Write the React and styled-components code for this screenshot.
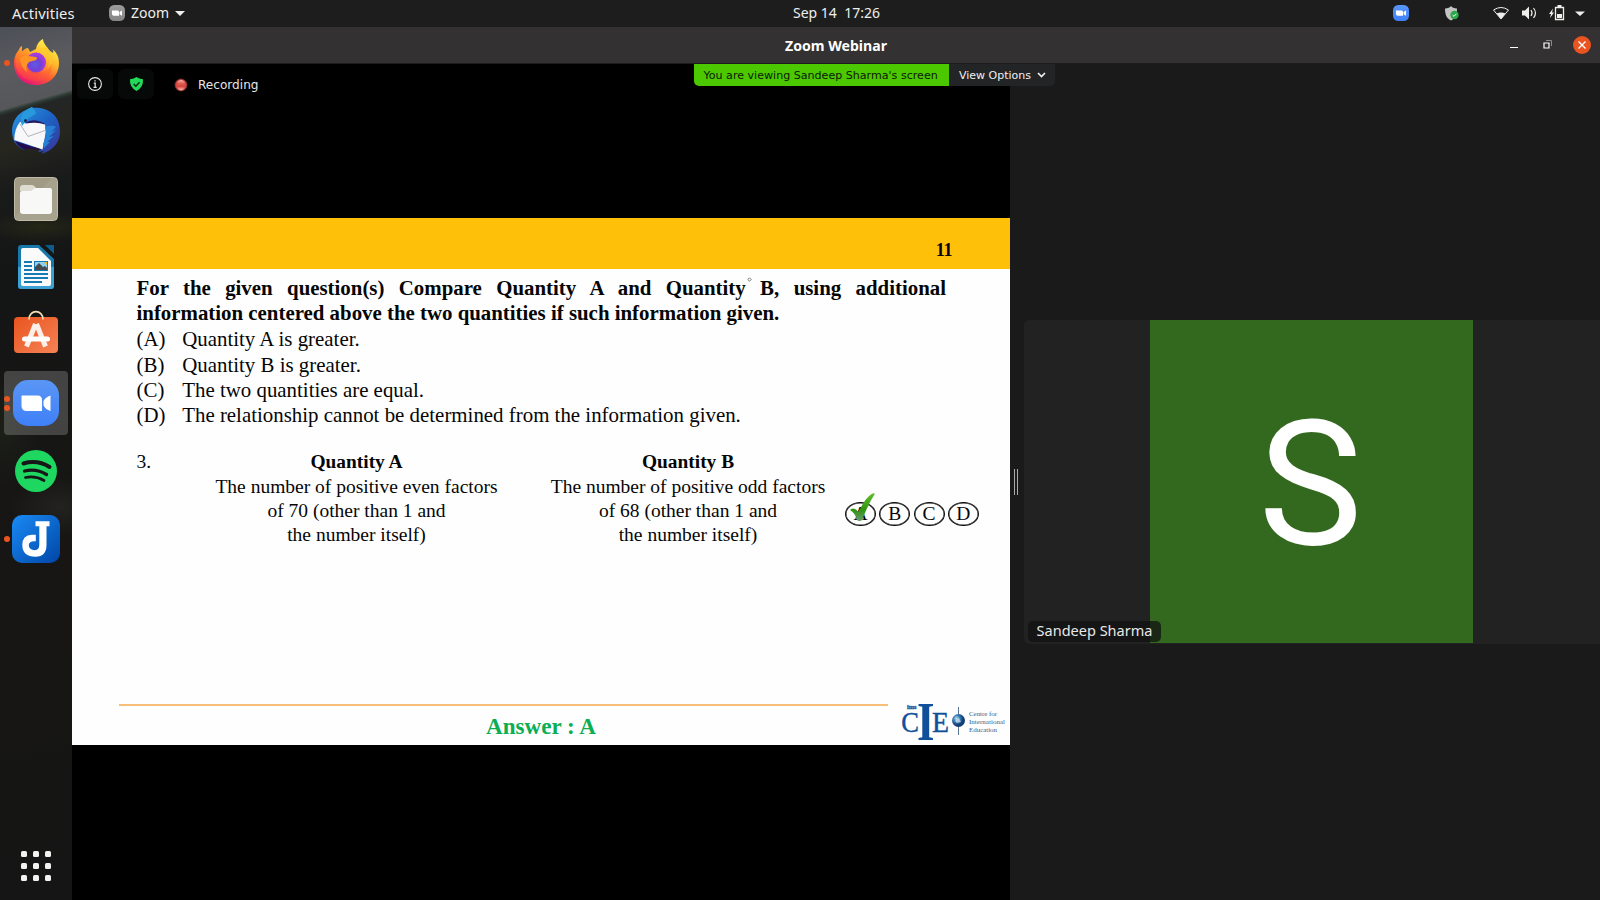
import React from 'react';
import styled, { createGlobalStyle } from 'styled-components';

const GlobalStyle = createGlobalStyle`
  *, *::before, *::after { box-sizing: border-box; }
  body { margin: 0; background: #000; font-family: "Noto Sans", sans-serif; overflow: hidden; }
  svg { display: block; flex: none; overflow: visible; }
`;

const Desktop = styled.div`
  display: grid;
  grid-template: 27px 873px / 72px 1528px;
  width: 1600px;
  height: 900px;
  background: #1a1a1a;
`;

const TopBar = styled.header`
  grid-column: 1 / -1;
  display: flex;
  align-items: center;
  background: #1d1d1d;
  color: #eeeeec;
  font-size: 14px;
  line-height: 26px;
  white-space: pre;
`;
const Activities = styled.span`
  width: 109px;
  padding: 0 0 1px 12px;
  font-size: 14.7px;
  letter-spacing: 0.15px;
`;
const AppMenu = styled.div`
  display: flex;
  align-items: center;
  gap: 6px;
  width: 684px;
  padding-bottom: 1px;
`;
const Clock = styled.time`
  width: 600px;
  padding-bottom: 1px;
`;
const Tray = styled.div`
  display: flex;
  align-items: center;
  gap: 20px;
  padding-bottom: 1px;
`;

const Dock = styled.nav`
  display: flex;
  flex-direction: column;
  gap: 4px;
  padding: 4px 4px 2px;
  background:
    radial-gradient(ellipse 60px 16px at 40px 200px, rgba(58, 62, 22, 0.4), transparent),
    radial-gradient(ellipse 40px 60px at 4px 400px, rgba(40, 48, 28, 0.35), transparent),
    radial-gradient(ellipse 50px 30px at 60px 480px, rgba(46, 46, 44, 0.5), transparent),
    linear-gradient(164deg, #4c4f57 0, #5b5b5f 45px, #55575a 80px, #2b3a32 83px, #242626 86px, #26261f 120px, #191a1a 160px, #141515 240px, #171614 520px, #151515 100%);
`;
const DockSlot = styled.div`
  position: relative;
  display: flex;
  align-items: center;
  justify-content: center;
  width: 64px;
  height: 64px;
  border-radius: 4px;
  background: ${(p) => (p.$active ? 'rgba(255,255,255,0.2)' : 'transparent')};
`;
const RunningDots = styled.span`
  position: absolute;
  left: 0;
  top: 0;
  height: 100%;
  display: flex;
  flex-direction: column;
  justify-content: center;
  gap: 3px;
`;
const Dot = styled.i`
  width: 6px;
  height: 6px;
  border-radius: 50%;
  background: #e95420;
`;
const AppGrid = styled.div`
  display: grid;
  grid-template: repeat(3, 6px) / repeat(3, 6px);
  gap: 6px;
  margin: auto auto 17px;
`;
const GridCell = styled.i`
  border-radius: 1.5px;
  background: #f2f2f0;
`;

const Window = styled.main`
  position: relative;
  display: grid;
  grid-template: 37px 836px / 938px 590px;
`;
const TitleBar = styled.div`
  grid-column: 1 / -1;
  display: grid;
  grid-template-columns: 1fr auto 1fr;
  align-items: center;
  background: #333132;
  border-bottom: 1px solid #1c1b1b;
  color: #fff;
  font-size: 14.1px;
  font-weight: 700;
`;
const WindowButtons = styled.div`
  display: flex;
  align-items: center;
  justify-content: flex-end;
  padding-right: 9px;
`;
const CloseButton = styled.span`
  display: grid;
  place-items: center;
  width: 18px;
  height: 18px;
  margin-left: 21px;
  border-radius: 50%;
  background: #e95420;
`;

const ShareBanner = styled.div`
  position: absolute;
  left: 622px;
  top: 37px;
  display: flex;
  height: 22px;
  border-radius: 0 0 5px 5px;
  overflow: hidden;
  font: 11.08px/23px "DejaVu Sans", sans-serif;
`;
const ShareNotice = styled.span`
  width: 255px;
  padding-left: 9.5px;
  background: #4bc800;
  color: #0b1a05;
  white-space: nowrap;
`;
const ViewOptions = styled.span`
  display: flex;
  align-items: center;
  gap: 6px;
  width: 106px;
  padding-left: 10px;
  background: #222426;
  color: #f0f0f0;
  font-size: 11px;
  white-space: nowrap;
`;

const Stage = styled.section`
  display: flex;
  flex-direction: column;
  background: #000;
`;
const Controls = styled.div`
  display: flex;
  align-items: center;
  gap: 5px;
  height: 154px;
  padding: 5px 5px 119px;
  color: #e6e6e6;
  font: 12.1px "DejaVu Sans", sans-serif;
`;
const ControlButton = styled.div`
  display: grid;
  place-items: center;
  width: 36px;
  height: 30px;
  border-radius: 6px;
  background: #070909;
`;
const Recording = styled.div`
  display: flex;
  align-items: center;
  gap: 10px;
  margin-left: 15px;
  padding-top: 1px;
`;

const Slide = styled.article`
  position: relative;
  display: flex;
  flex-direction: column;
  height: 527px;
  background: #fefefe;
  color: #060606;
  font-family: "Liberation Serif", serif;
`;
const SlideBand = styled.div`
  height: 51px;
  padding: 22px 58px 0 0;
  background: #ffc00a;
  font-size: 18px;
  font-weight: 700;
  line-height: 20px;
  letter-spacing: -0.4px;
  text-align: right;
`;
const SlideBody = styled.div`
  flex: 1;
  padding: 7px 0 0 64.5px;
`;
const Prompt = styled.p`
  width: 809.5px;
  margin: 0;
  font-size: 20.87px;
  font-weight: 700;
  line-height: 25px;
  white-space: nowrap;
  text-align-last: ${(p) => (p.$spread ? 'justify' : 'left')};
`;
const Choices = styled.div`
  display: grid;
  grid-template-columns: 45.7px 1fr;
  grid-auto-rows: 25.2px;
  margin-top: 1.4px;
  font-size: 20.9px;
  line-height: 25.2px;
`;
const Question = styled.div`
  display: grid;
  grid-template-columns: 70px 300px 31.5px 300px 7px auto;
  margin-top: 20.3px;
  font-size: 19.5px;
  line-height: 27px;
`;
const Quantity = styled.div`
  font-size: 19.5px;
  line-height: 23.6px;
  text-align: center;
`;
const QuantityTitle = styled.div`
  font-size: 19.4px;
  font-weight: 700;
  line-height: 27px;
`;
const Bubbles = styled.div`
  position: relative;
  display: flex;
  gap: 3.3px;
  padding-top: 54px;
`;
const Bubble = styled.span`
  width: 31px;
  height: 24px;
  border: 1.4px solid #0a0a0a;
  border-radius: 50%;
  box-shadow: inset 0 0 0 0.5px #222;
  font-size: 19.5px;
  line-height: 22px;
  text-align: center;
`;
const CheckMark = styled.svg`
  position: absolute;
  left: 5px;
  top: 45px;
`;
const PointerMark = styled.svg`
  position: absolute;
  left: 675px;
  top: 59px;
`;
const SlideFooter = styled.footer`
  display: flex;
  height: 43px;
  padding-left: 47px;
`;
const AnswerBlock = styled.div`
  width: 769px;
  margin: 2px 13px 0 0;
  padding-left: 75px;
  background: linear-gradient(#f7bf78, #f7bf78) 0 0 / 100% 2px no-repeat;
  color: #0cae52;
  font-size: 23.1px;
  font-weight: 700;
  line-height: 44.6px;
  text-align: center;
`;

const Gallery = styled.aside`
  display: flex;
  align-items: center;
  padding: 0 0 0 4px;
  background: #1a1a1a;
`;
const Splitter = styled.div`
  width: 4px;
  height: 26px;
  margin-right: 6px;
  border: solid #a9a9a9;
  border-width: 0 1px;
`;
const Tile = styled.div`
  display: flex;
  align-items: flex-end;
  width: 576px;
  height: 324px;
  padding: 0 0 2px 4px;
  border-radius: 6px 0 0 6px;
  background: linear-gradient(#33691e, #33691e) 126px 0 / 323px 323px no-repeat, #222;
`;
const NameTag = styled.span`
  z-index: 1;
  width: 133px;
  height: 21px;
  border-radius: 5px;
  background: rgba(18, 18, 18, 0.75);
  color: #e8e8e8;
  font-size: 14.5px;
  line-height: 19.4px;
  text-align: center;
  white-space: nowrap;
`;
const Initial = styled.span`
  align-self: center;
  width: 323px;
  margin-left: -12px;
  padding-top: 7px;
  color: #fff;
  font: 175px/200px Roboto, sans-serif;
  text-align: center;
`;

function Camera({ size, color, body = '#fff' }) {
  return (
    <svg width={size} height={size} viewBox="0 0 46 46">
      <defs>
        <linearGradient id={`cam${color[0].slice(1)}`} x1="0" y1="0" x2="0" y2="1">
          <stop offset="0" stopColor={color[0]} />
          <stop offset="1" stopColor={color[1]} />
        </linearGradient>
      </defs>
      <rect width="46" height="46" rx="15" fill={`url(#cam${color[0].slice(1)})`} />
      <path d="M9 15.500h15.500q4.500 0 4.500 4.500v11h-15q-5.500 0-5.500-5V16zM30.500 21q2-4 7-5.500v15.500q-5-1.500-7-5.500z" fill={body} />
    </svg>
  );
}

const Caret = () => (
  <svg width="10" height="5" viewBox="0 0 10 5"><path d="M0 0h10L5 5z" fill="#eeeeec" /></svg>
);

const TrayIcons = () => (
  <svg width="160" height="27" viewBox="0 0 160 27" fill="#eeeeec">
    <path d="M22 20.500c-4-2-6-5-6-12 3 0 5-1 6-2.500 1 1.500 3 2.500 6 2.500 0 7-2 10-6 12z" fill="#c4c4c2" />
    <circle cx="25.500" cy="15" r="4.200" fill="#2ba84a" />
    <path d="M23.600 15l1.400 1.400 2.400-2.600" fill="none" stroke="#fff" strokeWidth="1" />
    <path d="M64.500 10q7.500-5 15 0L72 19z" fill="none" stroke="#eeeeec" strokeWidth="1" />
    <path d="M67.500 13.500q4.500-2 9 0L72 19z" />
    <path d="M93 10.500h3l4-4v13l-4-4h-3z" />
    <path d="M102 10q2 3 0 6M104.500 8q4 5 0 10" fill="none" stroke="#eeeeec" strokeWidth="1.200" />
    <path d="M124 8.500l-4 5.500h2l-1 4 4-5.500h-2z" />
    <path d="M126.500 7.500h8v12h-8z" fill="none" stroke="#eeeeec" strokeWidth="1.300" />
    <path d="M128.500 5h4v2h-4zM128 14h5v4h-5z" />
    <path d="M146 11.500h10l-5 4.500z" />
  </svg>
);

const Firefox = () => (
  <svg width="48" height="48" viewBox="0 0 48 48">
    <defs>
      <linearGradient id="ffBody" x1=".8" y1=".1" x2=".3" y2="1">
        <stop offset="0" stopColor="#fff04a" /><stop offset=".35" stopColor="#ffb52a" />
        <stop offset=".65" stopColor="#ff5a30" /><stop offset="1" stopColor="#e3127b" />
      </linearGradient>
      <linearGradient id="ffFox" x1=".7" y1="0" x2=".3" y2="1">
        <stop offset="0" stopColor="#ffc327" /><stop offset=".5" stopColor="#ff7a2b" /><stop offset="1" stopColor="#f92c55" />
      </linearGradient>
      <radialGradient id="ffGlobe" cx=".45" cy=".6">
        <stop offset="0" stopColor="#5b5ce8" /><stop offset=".6" stopColor="#7440d4" /><stop offset="1" stopColor="#a33be0" />
      </radialGradient>
    </defs>
    <path d="M31 0c0 4 4 8 7 12l3 2c1-2 0-3-1-4 6 4 7 10 7 14 0 13-10 22-23 22S2 37 2 24c0-6 2-10 5-13 0-1 1-3 3-4v5l5 0 1-3 2 4c2-1 4-2 6-3 1-5 3-8 7-10z" fill="url(#ffBody)" />
    <path d="M10 7v6c1-2 4-4 6-4v4l5 5-7 6 4 9q9 7 17-2 4-5 2-12 7 16-7 22-14 4-23-7C1 26 3 14 10 7z" fill="url(#ffFox)" />
    <circle cx="24" cy="23.500" r="10" fill="url(#ffGlobe)" />
    <path d="M8 19q4-3 8-2l8 1q2 1 0 3c-2 1-5 1-7 2-3 3-3 7-2 10-4-3-7-9-7-14z" fill="#ff9324" />
    <path d="M27 11q6-1 9 6t-1 14q6-6 5-14l-5-9-6 1z" fill="#ffc928" opacity=".75" />
  </svg>
);

const Thunderbird = () => (
  <svg width="48" height="48" viewBox="0 0 48 48">
    <defs>
      <linearGradient id="tb" x1="0" y1="0" x2="1" y2="1">
        <stop offset="0" stopColor="#2c9be3" /><stop offset=".5" stopColor="#1c63c4" /><stop offset="1" stopColor="#3c2f94" />
      </linearGradient>
    </defs>
    <path d="M20 0l1 1c8-1 27 2 27 24 0 10-7 19-19 22l3-3-6 1 3-4C14 39 11 42 13 43 4 40 0 33 0 24 0 14 6 6 14 3z" fill="url(#tb)" />
    <path d="M13 16q9-6 20 1l-1 3z" fill="#271a66" />
    <path d="M2.300 33q0-11 5.700-18l6 1.500q11-2 19 1l1 7-3.500 18z" fill="#f8f8fa" />
    <path d="M3 34l27 9-12-1q-6-1-5 1-7-3-10-9z" fill="#230b4d" />
    <path d="M8 17l8 12.500 17-6" fill="none" stroke="#b5b5ba" strokeWidth="1" />
    <path d="M20 0q-8 3-10 8-2 4-1 7l1 4 3-4q4-5 9-7 3-2 1-4z" fill="#269adc" />
    <circle cx="13.500" cy="13.500" r="1.500" fill="#1a2450" />
    <path d="M33 20q8-3 11 0l-5 5 5-2-7 7 5-1-7 6 3 0-6 6-1-4q4-7 2-17z" fill="#2681d4" />
  </svg>
);

const Files = () => (
  <svg width="44" height="44" viewBox="0 0 44 44">
    <rect x=".5" y=".5" width="43" height="43" rx="4" fill="#a19b86" stroke="#c0baa8" />
    <path d="M1 40L38 1h2q3 0 3 3v36q0 3-3 3H4z" fill="#aca693" opacity=".6" />
    <path d="M6 11q0-3 3-3h9q2 0 4 3l2 3H6z" fill="#dedbd0" />
    <path d="M6 16q0-2 2-2h9l4-3h15q2 0 2 2v21q0 3-3 3H9q-3 0-3-3z" fill="#f8f8f6" />
  </svg>
);

const Writer = () => (
  <svg width="36" height="44" viewBox="0 0 36 44">
    <path d="M3 0h18l15 14v27q0 3-3 3H3q-3 0-3-3V3q0-3 3-3z" fill="#1877ab" />
    <path d="M0 22h36v19q0 3-3 3H3q-3 0-3-3z" fill="#3ca0d4" />
    <path d="M27 0h9v9z" fill="#0f5b8c" />
    <path d="M5 3h15l13 13v23q0 2-2 2H5q-2 0-2-2V5q0-2 2-2z" fill="#fafafa" />
    <path d="M6 17h8M6 21h8M6 25h8M6 29h24M6 33h24M6 37h18" stroke="#147ab4" strokeWidth="2" />
    <path d="M16 16h14v10H16z" fill="#147ab4" />
    <path d="M17 17h12v8H17z" fill="#8fd0f0" />
    <path d="M26 17h3v3z" fill="#f2b91d" />
    <path d="M17 25v-3l4-4 4 4 2-1 2 2v2z" fill="#454a4f" />
  </svg>
);

const Software = () => (
  <svg width="44" height="50" viewBox="0 0 44 50">
    <defs><linearGradient id="sw" x1="0" y1="0" x2="1" y2="1"><stop offset="0" stopColor="#e95420" /><stop offset="1" stopColor="#f58355" /></linearGradient></defs>
    <rect y="7" width="44" height="36" rx="4" fill="url(#sw)" />
    <path d="M15 9.500C15-1 29-1 29 9.500" fill="none" stroke="#f3dfb4" strokeWidth="1.700" />
    <path d="M21.500 14L12.500 36.500M22.500 14l9 22.500" fill="none" stroke="#fbefe9" strokeWidth="5" />
    <path d="M10.500 29h23" stroke="#fff" strokeWidth="5" strokeLinecap="round" />
  </svg>
);

const Spotify = () => (
  <svg width="42" height="42" viewBox="0 0 42 42">
    <circle cx="21" cy="21" r="21" fill="#1ed760" />
    <g fill="none" stroke="#171717" strokeLinecap="round">
      <path d="M8.500 13.500q14-4 26 3.500" strokeWidth="4" />
      <path d="M9.500 21q12-3 22 3.500" strokeWidth="3.300" />
      <path d="M10.500 27.500q10-2 18.500 3" strokeWidth="2.800" />
    </g>
  </svg>
);

const Joplin = () => (
  <svg width="48" height="48" viewBox="0 0 48 48">
    <defs><linearGradient id="jp" x1="0" y1="0" x2="1" y2="1"><stop offset="0" stopColor="#1a8bf5" /><stop offset="1" stopColor="#0046a6" /></linearGradient></defs>
    <rect width="48" height="48" rx="10" fill="url(#jp)" />
    <path d="M23.500 6.300H37.500v5H34.500V30q0 11.500-11 11.700Q10.300 41.500 10.300 30q0-10 9.500-10.300h4v6.500q-7-.5-7 4t6 5q4.500-.4 4.500-5.500V11.300h-3.800z" fill="#fff" />
  </svg>
);

const CieLogo = () => (
  <svg width="105" height="43" viewBox="0 0 105 43" fontFamily="Liberation Serif, serif" fill="#10509a">
    <defs><radialGradient id="globe" cx=".35" cy=".35"><stop offset="0" stopColor="#c9e2f2" /><stop offset=".5" stopColor="#3b83b8" /><stop offset="1" stopColor="#123d78" /></radialGradient></defs>
    <text x="6" y="7" fontSize="6" fontWeight="700" textLength="9.500" lengthAdjust="spacingAndGlyphs" stroke="#10509a" strokeWidth=".3">ims</text>
    <text x=".3" y="29.800" fontSize="29" textLength="17.700" lengthAdjust="spacingAndGlyphs" stroke="#10509a" strokeWidth=".4">C</text>
    <text x="16" y="38" fontSize="55.500" fontWeight="700" textLength="17.500" lengthAdjust="spacingAndGlyphs">I</text>
    <text x="31" y="29.800" fontSize="29" textLength="17" lengthAdjust="spacingAndGlyphs" stroke="#10509a" strokeWidth=".4">E</text>
    <path d="M57.500 5v28" stroke="#49698a" strokeWidth=".9" />
    <circle cx="57.500" cy="18.500" r="6.500" fill="url(#globe)" />
    <path d="M54 19l4-3 2 4-4 1z" fill="#d6e8f2" opacity=".7" />
    <g fontSize="7" fill="#3c5f88">
      <text x="68" y="14" textLength="28">Centre for</text>
      <text x="68" y="22" textLength="36">International</text>
      <text x="68" y="30" textLength="28">Education</text>
    </g>
  </svg>
);

const APPS = [
  { name: 'firefox', icon: <Firefox />, windows: 1 },
  { name: 'thunderbird', icon: <Thunderbird />, windows: 0 },
  { name: 'files', icon: <Files />, windows: 0 },
  { name: 'writer', icon: <Writer />, windows: 0 },
  { name: 'software', icon: <Software />, windows: 0 },
  { name: 'zoom', icon: <Camera size={46} color={['#5a96f5', '#3f80f8']} />, windows: 2, active: true },
  { name: 'spotify', icon: <Spotify />, windows: 0 },
  { name: 'joplin', icon: <Joplin />, windows: 1 },
];

const CHOICES = [
  ['(A)', 'Quantity A is greater.'],
  ['(B)', 'Quantity B is greater.'],
  ['(C)', 'The two quantities are equal.'],
  ['(D)', 'The relationship cannot be determined from the information given.'],
];

export default function App() {
  return (
    <Desktop>
      <GlobalStyle />
      <TopBar>
        <Activities>Activities</Activities>
        <AppMenu>
          <Camera size={16} color={['#9b9b9b', '#858585']} />
          <span>Zoom</span>
          <Caret />
        </AppMenu>
        <Clock>{'Sep 14  17:26'}</Clock>
        <Tray>
          <Camera size={16} color={['#5a96f6', '#3f80f8']} />
          <TrayIcons />
        </Tray>
      </TopBar>

      <Dock>
        {APPS.map((app) => (
          <DockSlot key={app.name} $active={app.active}>
            <RunningDots>
              {Array.from({ length: app.windows }, (_, i) => <Dot key={i} />)}
            </RunningDots>
            {app.icon}
          </DockSlot>
        ))}
        <AppGrid>
          {Array.from({ length: 9 }, (_, i) => <GridCell key={i} />)}
        </AppGrid>
      </Dock>

      <Window>
        <TitleBar>
          <span />
          <span>Zoom Webinar</span>
          <WindowButtons>
            <svg width="43" height="12" viewBox="0 0 43 12" fill="none" stroke="#fff">
              <path d="M1 8.500h8" />
              <path d="M37 1.500h5.500v5.500" stroke="#8d8b8b" />
              <path d="M35 4h5v5h-5z" strokeWidth="1.200" />
            </svg>
            <CloseButton>
              <svg width="8" height="8" viewBox="0 0 8 8"><path d="M.5.5l7 7M7.500.5l-7 7" stroke="#fff" strokeWidth="1.400" /></svg>
            </CloseButton>
          </WindowButtons>
        </TitleBar>

        <Stage>
          <Controls>
            <ControlButton>
              <svg width="14" height="14" viewBox="0 0 14 14" fill="none" stroke="#e8e8e8">
                <circle cx="7" cy="7" r="6.400" strokeWidth="1.100" />
                <path d="M5.800 6.200H7.200v4M5.500 10.300h3.200M6.400 3.800h1.300" strokeWidth="1.200" />
              </svg>
            </ControlButton>
            <ControlButton>
              <svg width="13" height="14" viewBox="0 0 13 14">
                <path d="M6.500 0Q9 2 13 2.200q.6 8-6.500 11.800Q-.6 10.200 0 2.200 4 2 6.500 0z" fill="#23d959" />
                <path d="M3.700 7l2.100 2.200 3.800-4" fill="none" stroke="#052b10" strokeWidth="1.500" />
              </svg>
            </ControlButton>
            <Recording>
              <svg width="14" height="14" viewBox="0 0 14 14">
                <defs><linearGradient id="rec" x1="0" y1="0" x2="0" y2="1"><stop offset="0" stopColor="#f3b6ae" /><stop offset=".4" stopColor="#e0554a" /><stop offset=".65" stopColor="#d8473d" /><stop offset="1" stopColor="#f0c4be" /></linearGradient></defs>
                <circle cx="7" cy="7" r="6" fill="#cf463c" stroke="#7c332e" strokeWidth=".8" />
                <ellipse cx="7" cy="7" rx="4" ry="5.300" fill="url(#rec)" />
              </svg>
              <span>Recording</span>
            </Recording>
          </Controls>

          <Slide>
            <SlideBand>11</SlideBand>
            <SlideBody>
              <Prompt $spread>For the given question(s) Compare Quantity A and Quantity B, using additional</Prompt>
              <Prompt>information centered above the two quantities if such information given.</Prompt>
              <Choices>
                {CHOICES.map(([letter, text]) => (
                  <React.Fragment key={letter}>
                    <span>{letter}</span>
                    <span>{text}</span>
                  </React.Fragment>
                ))}
              </Choices>
              <Question>
                <span>3.</span>
                <Quantity>
                  <QuantityTitle>Quantity A</QuantityTitle>
                  The number of positive even factors<br />of 70 (other than 1 and<br />the number itself)
                </Quantity>
                <span />
                <Quantity>
                  <QuantityTitle>Quantity B</QuantityTitle>
                  The number of positive odd factors<br />of 68 (other than 1 and<br />the number itself)
                </Quantity>
                <span />
                <Bubbles>
                  {['A', 'B', 'C', 'D'].map((l) => <Bubble key={l}>{l}</Bubble>)}
                  <CheckMark width="25" height="29" viewBox="0 0 25 29">
                    <defs><linearGradient id="tick" x1="0" y1="0" x2="0" y2="1"><stop offset="0" stopColor="#5fbf2a" /><stop offset=".6" stopColor="#2f9412" /><stop offset="1" stopColor="#6a9a68" /></linearGradient></defs>
                    <path d="M0 17q2-2.500 5-1 2 1 3.500 3Q15 5 22 .8q2-1 2.800.2Q18 11 12.500 26.500q-2 2.500-5 1Q5 20 0 17z" fill="url(#tick)" />
                  </CheckMark>
                </Bubbles>
              </Question>
            </SlideBody>
            <PointerMark width="5" height="5" viewBox="0 0 5 5">
              <path d="M2.500.8l1.700 1.700-1.700 1.700L.8 2.500z" fill="#fff" stroke="#555" strokeWidth=".8" />
            </PointerMark>
            <SlideFooter>
              <AnswerBlock>Answer : A</AnswerBlock>
              <CieLogo />
            </SlideFooter>
          </Slide>
        </Stage>

        <Gallery>
          <Splitter />
          <Tile>
            <NameTag>Sandeep Sharma</NameTag>
            <Initial>S</Initial>
          </Tile>
        </Gallery>

        <ShareBanner>
          <ShareNotice>You are viewing Sandeep Sharma's screen</ShareNotice>
          <ViewOptions>
            View Options
            <svg width="9" height="6" viewBox="0 0 9 6"><path d="M1 1l3.500 3.500L8 1" fill="none" stroke="#f0f0f0" strokeWidth="1.700" /></svg>
          </ViewOptions>
        </ShareBanner>
      </Window>
    </Desktop>
  );
}
